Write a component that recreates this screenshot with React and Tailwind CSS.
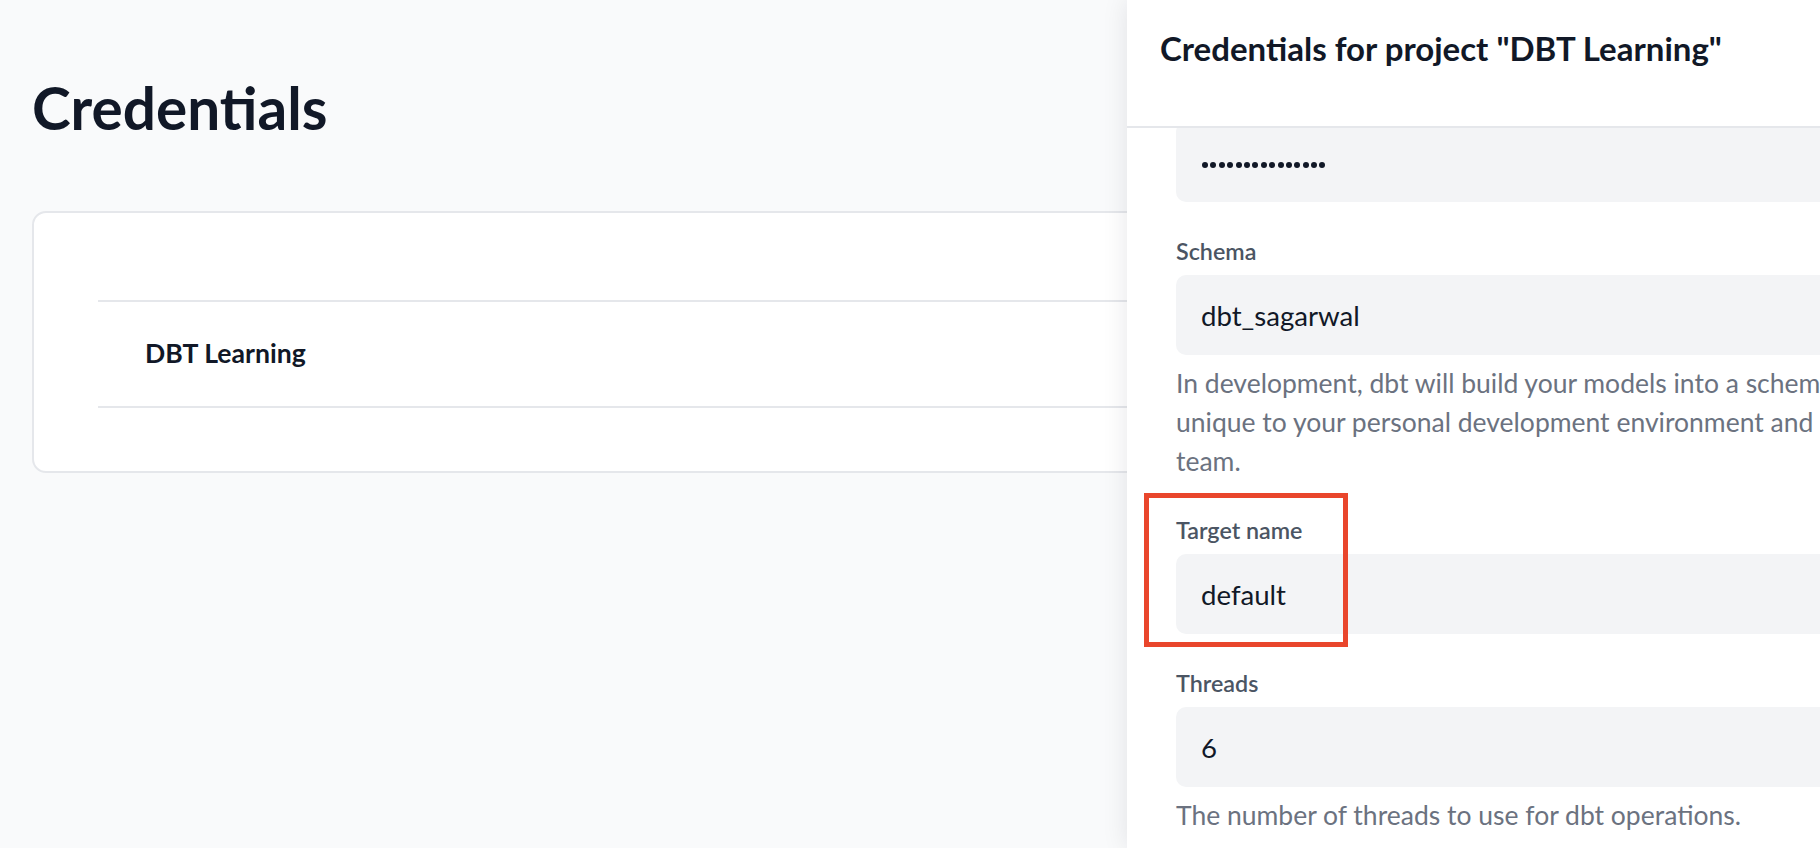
function Field({ label, value, help, highlight = false }) {
  return (
    <div className="relative">
      {highlight && (
        <div className="absolute left-[-32px] top-[-21px] h-[154px] w-[204px] border-[5px] border-[#e9462c] pointer-events-none" />
      )}
      <label className="block h-[32px] text-[23.3px] leading-[32px] font-semibold text-[#4b5563]">{label}</label>
      <input
        type="text"
        readOnly
        value={value}
        className="mt-[8px] block h-[80px] w-full rounded-[10px] border-0 bg-[#f3f4f6] px-[25px] text-[27.6px] text-[#111827] outline-none"
      />
      {help && (
        <p className="mt-[9px] whitespace-nowrap text-[26.5px] leading-[39px] text-[#6b7280]">{help}</p>
      )}
    </div>
  );
}

export default function App() {
  return (
    <div className="relative h-[848px] w-full overflow-hidden bg-[#f9fafb] font-[Lato,sans-serif]">
      <div className="px-[32px] pt-[72px]">
        <h1 className="text-[58.5px] leading-[70px] font-bold text-[#111827]">Credentials</h1>

        <div className="mt-[69px] rounded-[14px] border-2 border-[#e5e7eb] bg-white pt-[87px] pb-[63px] pl-[64px]">
          <div className="border-y-2 border-[#e5e7eb]">
            <div className="flex h-[104px] items-center pl-[47px] text-[26.6px] font-bold text-[#111827]">
              DBT Learning
            </div>
          </div>
        </div>
      </div>

      {/* slide-over */}
      <div className="absolute top-0 right-0 flex h-full w-[693px] flex-col bg-white shadow-[0_0_24px_rgba(17,24,39,0.10)]">
        <div className="h-[128px] shrink-0 border-b-2 border-[#e5e7eb] pt-[28px] pl-[33px]">
          <h2 className="whitespace-nowrap text-[33px] leading-[41px] font-bold text-[#111827]">
            Credentials for project "DBT Learning"
          </h2>
        </div>

        <div className="flex-1 overflow-hidden">
          <div className="-mt-[6px] flex w-[1000px] flex-col gap-[33px] pl-[49px]">
            {/* password (masked) */}
            <div className="flex h-[80px] w-full items-center gap-[2.4px] rounded-[10px] bg-[#f3f4f6] pt-[6px] pl-[26px]">
              {Array.from({ length: 15 }).map((_, i) => (
                <span key={i} className="h-[6px] w-[6px] rounded-full bg-[#111827]" />
              ))}
            </div>
            <Field
              label="Schema"
              value="dbt_sagarwal"
              help={<>In development, dbt will build your models into a schema<br />unique to your personal development environment and not shared with your<br />team.</>}
            />
            <Field label="Target name" value="default" highlight />
            <Field label="Threads" value="6" help="The number of threads to use for dbt operations." />
          </div>
        </div>
      </div>
    </div>
  );
}
